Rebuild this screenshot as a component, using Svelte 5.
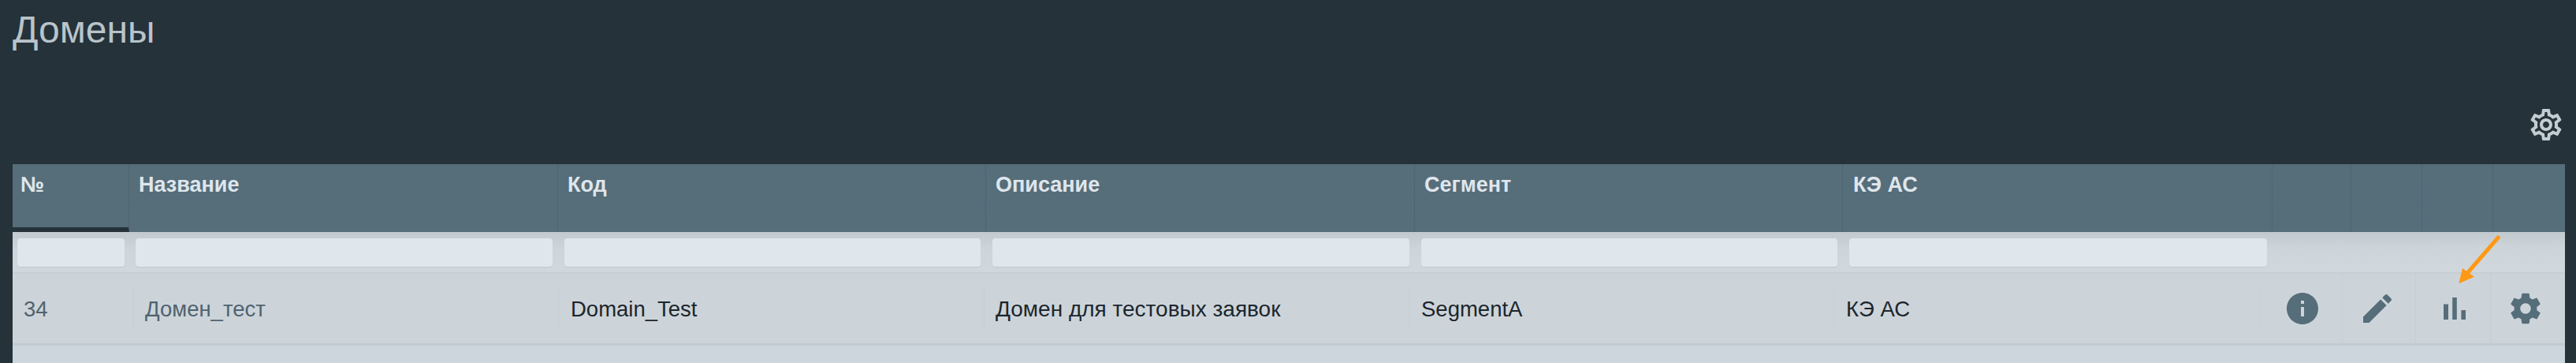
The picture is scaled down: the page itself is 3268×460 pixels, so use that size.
<script>
  const heads = ['№', 'Название', 'Код', 'Описание', 'Сегмент', 'КЭ АС', '', '', '', ''];
  const filters = [0, 1, 2, 3, 4, 5];
  const gear = 'M19.43 12.98c.04-.32.07-.64.07-.98s-.03-.66-.07-.98l2.11-1.65c.19-.15.24-.42.12-.64l-2-3.46c-.12-.22-.39-.3-.61-.22l-2.49 1c-.52-.4-1.08-.73-1.69-.98l-.38-2.65C14.46 2.18 14.25 2 14 2h-4c-.25 0-.46.18-.49.42l-.38 2.65c-.61.25-1.17.59-1.69.98l-2.49-1c-.23-.09-.49 0-.61.22l-2 3.46c-.13.22-.07.49.12.64l2.11 1.65c-.04.32-.07.65-.07.98s.03.66.07.98l-2.11 1.65c-.19.15-.24.42-.12.64l2 3.46c.12.22.39.3.61.22l2.49-1c.52.4 1.08.73 1.69.98l.38 2.65c.03.24.24.42.49.42h4c.25 0 .46-.18.49-.42l.38-2.65c.61-.25 1.17-.59 1.69-.98l2.49 1c.23.09.49 0 .61-.22l2-3.46c.12-.22.07-.49-.12-.64l-2.11-1.65zM12 15.5c-1.93 0-3.5-1.57-3.5-3.5s1.57-3.5 3.5-3.5 3.5 1.57 3.5 3.5-1.57 3.5-3.5 3.5z';
  const gearOutline = 'M19.43 12.98c.04-.32.07-.64.07-.98 0-.34-.03-.66-.07-.98l2.11-1.65c.19-.15.24-.42.12-.64l-2-3.46c-.09-.16-.26-.25-.44-.25-.06 0-.12.01-.17.03l-2.49 1c-.52-.4-1.08-.73-1.69-.98l-.38-2.65C14.46 2.18 14.25 2 14 2h-4c-.25 0-.46.18-.49.42l-.38 2.65c-.61.25-1.17.59-1.69.98l-2.49-1c-.06-.02-.12-.03-.18-.03-.17 0-.34.09-.43.25l-2 3.46c-.13.22-.07.49.12.64l2.11 1.65c-.04.32-.07.65-.07.98 0 .33.03.66.07.98l-2.11 1.65c-.19.15-.24.42-.12.64l2 3.46c.09.16.26.25.44.25.06 0 .12-.01.17-.03l2.49-1c.52.4 1.08.73 1.69.98l.38 2.65c.03.24.24.42.49.42h4c.25 0 .46-.18.49-.42l.38-2.65c.61-.25 1.17-.59 1.69-.98l2.49 1c.06.02.12.03.18.03.17 0 .34-.09.43-.25l2-3.46c.12-.22.07-.49-.12-.64l-2.11-1.65zm-1.98-1.71c.04.31.05.52.05.73 0 .21-.02.43-.05.73l-.14 1.13.89.7 1.08.84-.7 1.21-1.27-.51-1.04-.42-.9.68c-.43.32-.84.56-1.25.73l-1.06.43-.16 1.13-.2 1.35h-1.4l-.19-1.35-.16-1.13-1.06-.43c-.43-.18-.83-.41-1.23-.71l-.91-.7-1.06.43-1.27.51-.7-1.21 1.08-.84.89-.7-.14-1.13c-.03-.31-.05-.54-.05-.74s.02-.43.05-.73l.14-1.13-.89-.7-1.08-.84.7-1.21 1.27.51 1.04.42.9-.68c.43-.32.84-.56 1.25-.73l1.06-.43.16-1.13.2-1.35h1.39l.19 1.35.16 1.13 1.06.43c.43.18.83.41 1.23.71l.91.7 1.06-.43 1.27-.51.7 1.21-1.07.85-.89.7.14 1.13zM12 8c-2.21 0-4 1.79-4 4s1.79 4 4 4 4-1.79 4-4-1.79-4-4-4zm0 6c-1.1 0-2-.9-2-2s.9-2 2-2 2 .9 2 2-.9 2-2 2z';
</script>

<div class="page">
  <h1 class="title">Домены</h1>
  <div class="toolbar">
    <svg class="icon top-gear" viewBox="0 0 24 24"><path d={gearOutline} /></svg>
  </div>

  <div class="table">
    <div class="head grid-head">
      {#each heads as h, i}
        <div class="th" class:active={i === 0} class:last={i === heads.length - 1}>{h}</div>
      {/each}
    </div>

    <div class="filters grid-head">
      {#each filters as f}
        <div class="fcell"><div class="finput"></div></div>
      {/each}
    </div>

    <div class="row grid-row">
      <div class="td muted sep">34</div>
      <div class="td muted sep">Домен_тест</div>
      <div class="td sep">Domain_Test</div>
      <div class="td sep desc">Домен для тестовых заявок</div>
      <div class="td sep wide">SegmentA</div>
      <div class="td sep wide">КЭ АС</div>
      <div class="act info">
        <svg class="icon" viewBox="0 0 24 24"><path d="M12 2C6.48 2 2 6.48 2 12s4.48 10 10 10 10-4.48 10-10S17.52 2 12 2zm1 15h-2v-6h2v6zm0-8h-2V7h2v2z" /></svg>
      </div>
      <div class="act edit">
        <svg class="icon" viewBox="0 0 24 24"><path d="M3 17.25V21h3.75L17.81 9.94l-3.75-3.75L3 17.25zM20.71 7.04c.39-.39.39-1.02 0-1.41l-2.34-2.34c-.39-.39-1.02-.39-1.41 0l-1.83 1.83 3.75 3.75 1.83-1.83z" /></svg>
      </div>
      <div class="act chart">
        <svg class="icon" viewBox="0 0 24 24"><path d="M5 9.2h3V19H5zM10.6 5h2.8v14h-2.8zm5.6 8H19v6h-2.8z" /></svg>
      </div>
      <div class="act settings">
        <svg class="icon small" viewBox="0 0 24 24"><path d={gear} /></svg>
      </div>
    </div>

    <div class="next"></div>

    <svg class="arrow" viewBox="0 0 70 80" width="70" height="80">
      <line x1="62.7" y1="5.3" x2="17" y2="58" />
      <polygon points="11.3,65.3 16,46 31,56.7" />
    </svg>
  </div>
</div>

<style>
  :global(body) {
    margin: 0;
    background: #25323a;
    overflow: hidden;
  }
  .page {
    width: 3268px;
    height: 460px;
    overflow: hidden;
    box-sizing: border-box;
    padding: 0 14px 0 16px;
    font-family: "Liberation Sans", Arial, sans-serif;
  }
  .title {
    margin: 0;
    height: 76px;
    font-size: 48px;
    font-weight: 400;
    line-height: 76px;
    color: #b9c4ca;
  }
  .toolbar {
    height: 132px;
    display: flex;
    justify-content: flex-end;
    align-items: flex-start;
    box-sizing: border-box;
  }
  .icon {
    width: 48px;
    height: 48px;
    fill: #566d7a;
    display: block;
  }
  .icon.small {
    width: 46px;
    height: 46px;
  }
  .top-gear {
    fill: #c3ccd2;
    margin-top: 58px;
  }
  .table {
    position: relative;
    background: #cdd5db;
  }
  .grid-head {
    display: grid;
    grid-template-columns: 148px 544px 543px 544px 543px 545px 100px 90px 90px 91px;
  }
  .grid-row {
    display: grid;
    grid-template-columns: 154px 540px 539px 539px 539px 540px 105px 93px 95px 94px;
  }
  .head {
    background: #566d7a;
    height: 86px;
  }
  .th {
    box-sizing: border-box;
    height: 86px;
    padding: 11px 10px 0 12px;
    font-size: 27px;
    line-height: 30px;
    font-weight: 700;
    color: #dfe6ec;
    border-right: 1px dotted #4a5d69;
  }
  .th.active {
    padding-left: 10px;
    border-bottom: 6px solid #25323a;
  }
  .th:nth-child(6) {
    padding-left: 13px;
  }
  .th.last {
    border-right: 0;
  }
  .filters {
    height: 53px;
    box-sizing: border-box;
    padding-top: 8px;
    background: linear-gradient(#c2cad0, #cdd5db 40%, #d0d8de);
    border-bottom: 2px solid #c6ced4;
  }
  .fcell {
    padding: 0 7px 0 8px;
  }
  .fcell:first-child {
    padding: 0 6px;
  }
  .finput {
    height: 36px;
    background: #dfe6ec;
    border-radius: 4px;
    box-shadow: 0 1px 1px #bfc8cf;
  }
  .row {
    height: 91px;
    box-sizing: border-box;
    align-items: stretch;
    background: #ccd4da;
    border-bottom: 3px solid #c3cbd2;
  }
  .td {
    align-self: center;
    box-sizing: border-box;
    height: 54px;
    padding-left: 14px;
    font-size: 27.5px;
    line-height: 56px;
    color: #1c262c;
    white-space: nowrap;
  }
  .td.desc {
    font-size: 28px;
  }
  .td.wide {
    padding-left: 15px;
  }
  .td.sep {
    border-right: 1px solid #c7cfd5;
  }
  .muted {
    color: #50636e;
  }
  .act {
    display: flex;
    align-items: center;
    border-right: 1px solid #c6ced4;
  }
  .act.info {
    padding-left: 30px;
  }
  .act.edit {
    padding-left: 20px;
  }
  .act.chart {
    padding-left: 25px;
  }
  .act.settings {
    padding-left: 21px;
    border-right: 0;
  }
  .next {
    height: 22px;
    background: #cdd6dc;
  }
  .arrow {
    position: absolute;
    left: 3092px;
    top: 86px;
  }
  .arrow line {
    stroke: #ff9813;
    stroke-width: 5;
  }
  .arrow polygon {
    fill: #ff9813;
  }
</style>
